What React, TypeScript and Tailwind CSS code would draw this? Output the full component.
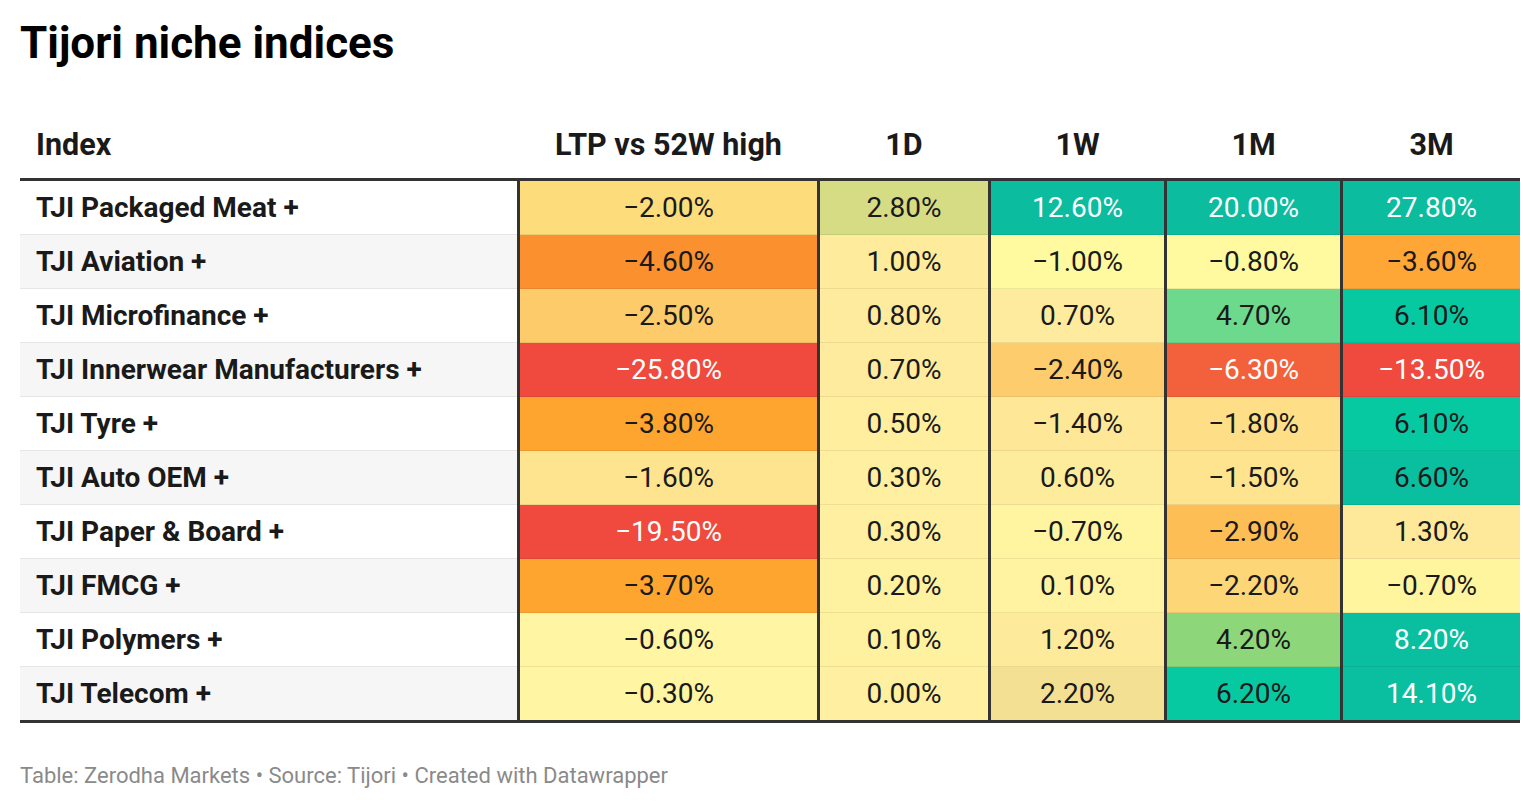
import React from "react";

type Cell = { v: string; bg: string; light?: boolean };
type Row = { name: string; cells: Cell[] };

const rows: Row[] = [
  {
    name: "TJI Packaged Meat +",
    cells: [
      { v: "−2.00%", bg: "#fddc7b" },
      { v: "2.80%", bg: "#d6dc84" },
      { v: "12.60%", bg: "#0bbc9f", light: true },
      { v: "20.00%", bg: "#0bbc9f", light: true },
      { v: "27.80%", bg: "#0bbc9f", light: true },
    ],
  },
  {
    name: "TJI Aviation +",
    cells: [
      { v: "−4.60%", bg: "#fb902e" },
      { v: "1.00%", bg: "#feeb9c" },
      { v: "−1.00%", bg: "#fffa9f" },
      { v: "−0.80%", bg: "#fffaa0" },
      { v: "−3.60%", bg: "#fea737" },
    ],
  },
  {
    name: "TJI Microfinance +",
    cells: [
      { v: "−2.50%", bg: "#fdcb69" },
      { v: "0.80%", bg: "#feeb9d" },
      { v: "0.70%", bg: "#feeb9d" },
      { v: "4.70%", bg: "#6cd98c" },
      { v: "6.10%", bg: "#06c9a2" },
    ],
  },
  {
    name: "TJI Innerwear Manufacturers +",
    cells: [
      { v: "−25.80%", bg: "#ef4a3d", light: true },
      { v: "0.70%", bg: "#feeb9d" },
      { v: "−2.40%", bg: "#fdcc6c" },
      { v: "−6.30%", bg: "#f2613c", light: true },
      { v: "−13.50%", bg: "#ef4a3d", light: true },
    ],
  },
  {
    name: "TJI Tyre +",
    cells: [
      { v: "−3.80%", bg: "#fea52f" },
      { v: "0.50%", bg: "#feee9e" },
      { v: "−1.40%", bg: "#fee797" },
      { v: "−1.80%", bg: "#fedf87" },
      { v: "6.10%", bg: "#06c9a2" },
    ],
  },
  {
    name: "TJI Auto OEM +",
    cells: [
      { v: "−1.60%", bg: "#fee48e" },
      { v: "0.30%", bg: "#fef0a0" },
      { v: "0.60%", bg: "#feec9d" },
      { v: "−1.50%", bg: "#fee48e" },
      { v: "6.60%", bg: "#0abf9f" },
    ],
  },
  {
    name: "TJI Paper & Board +",
    cells: [
      { v: "−19.50%", bg: "#ef4a3d", light: true },
      { v: "0.30%", bg: "#fef0a0" },
      { v: "−0.70%", bg: "#fff5a1" },
      { v: "−2.90%", bg: "#fdbe56" },
      { v: "1.30%", bg: "#fee99b" },
    ],
  },
  {
    name: "TJI FMCG +",
    cells: [
      { v: "−3.70%", bg: "#fea52f" },
      { v: "0.20%", bg: "#fef1a0" },
      { v: "0.10%", bg: "#fff3a1" },
      { v: "−2.20%", bg: "#fdd677" },
      { v: "−0.70%", bg: "#fff59f" },
    ],
  },
  {
    name: "TJI Polymers +",
    cells: [
      { v: "−0.60%", bg: "#fff5a2" },
      { v: "0.10%", bg: "#fef2a1" },
      { v: "1.20%", bg: "#feea9b" },
      { v: "4.20%", bg: "#8dd67a" },
      { v: "8.20%", bg: "#0abf9f", light: true },
    ],
  },
  {
    name: "TJI Telecom +",
    cells: [
      { v: "−0.30%", bg: "#fff5a2" },
      { v: "0.00%", bg: "#fef0a0" },
      { v: "2.20%", bg: "#f4e093" },
      { v: "6.20%", bg: "#06c9a2" },
      { v: "14.10%", bg: "#0abf9f", light: true },
    ],
  },
];

// data column widths, each one sits after a 3px dark rule
const colWidths = ["w-[297px]", "w-[168px]", "w-[173px]", "w-[173px]", "w-[177px]"];
const headers = ["LTP vs 52W high", "1D", "1W", "1M", "3M"];

const App = () => {
  return (
    <div className="w-[1540px] h-[810px] bg-white px-5 font-['Roboto',sans-serif] text-[#1a1a1a]">
      <h1 className="pt-[15px] text-[44px] leading-[56px] font-bold text-black">
        Tijori niche indices
      </h1>
      <div className="mt-[47px] w-[1500px]">
        <div className="flex h-[63px] items-center pb-[7px] border-b-[3px] border-[#333]">
          <div className="w-[497px] pl-4 text-[30.5px] font-bold">Index</div>
          {headers.map((h, i) => (
            <div
              key={h}
              className={`${colWidths[i]} ml-[3px] text-center text-[30.5px] font-bold`}
            >
              {h}
            </div>
          ))}
        </div>
        {rows.map((r, ri) => {
          const last = ri === rows.length - 1;
          return (
            <div
              key={r.name}
              className={`flex ${last ? "h-[56px] border-b-[3px] border-[#333]" : "h-[54px]"}`}
            >
              <div
                className={`w-[497px] flex items-center pl-4 pt-px text-[28px] font-bold ${
                  ri % 2 === 1 ? "bg-[#f6f6f6]" : "bg-white"
                } ${last ? "" : "border-b border-[#e6e6e6]"}`}
              >
                {r.name}
              </div>
              {r.cells.map((c, ci) => (
                <div
                  key={ci}
                  className={`${colWidths[ci]} box-content border-l-[3px] border-[#333] text-[28px] ${
                    c.light ? "text-white" : "text-[#1a1a1a]"
                  }`}
                  style={{ backgroundColor: c.bg }}
                >
                  <div
                    className={`w-full h-full flex items-center justify-center pt-px ${
                      last ? "" : "border-b border-black/[0.07]"
                    }`}
                  >
                    {c.v}
                  </div>
                </div>
              ))}
            </div>
          );
        })}
      </div>
      <div className="mt-[38px] text-[22px] leading-[30px] text-[#8a8a8a]">
        Table: Zerodha Markets • Source: Tijori • Created with Datawrapper
      </div>
    </div>
  );
};

export default App;
